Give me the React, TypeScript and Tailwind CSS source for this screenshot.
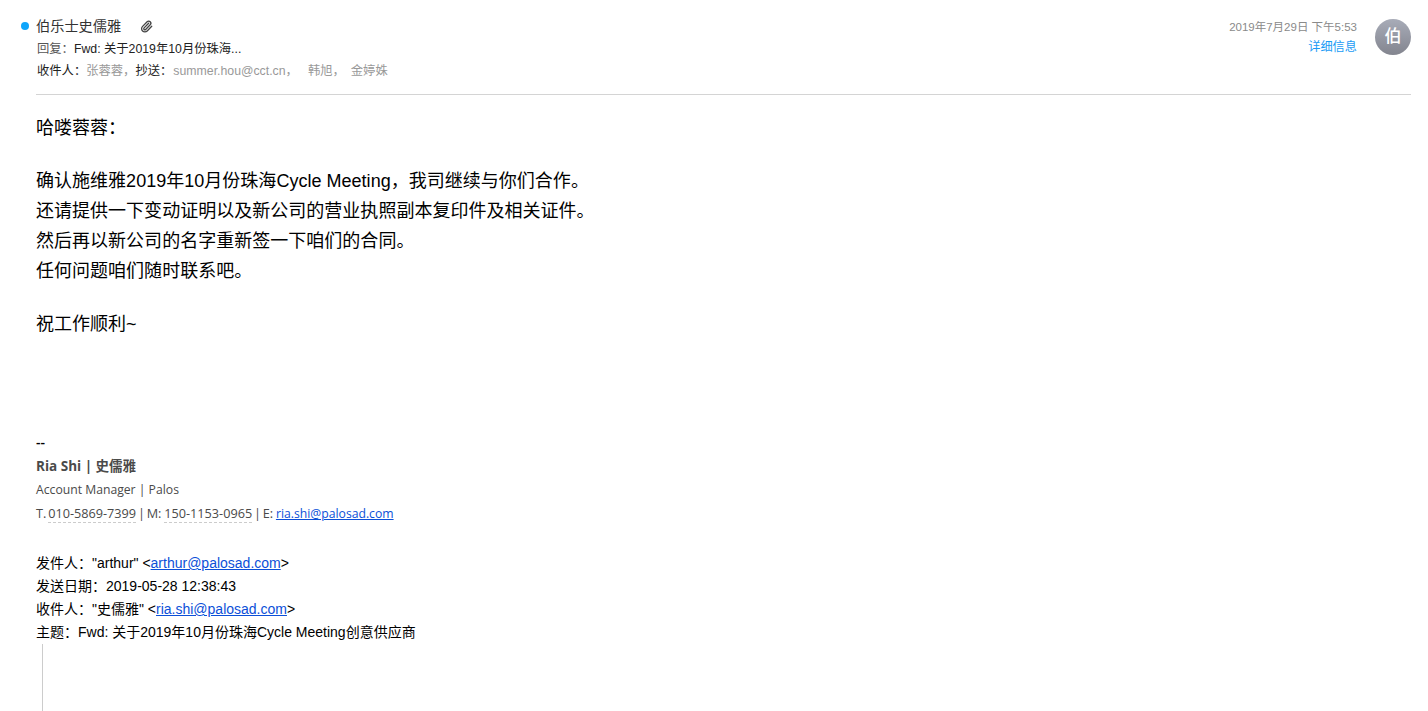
import { Paperclip } from 'lucide-react';

const sans = "font-['Liberation_Sans','Noto_Sans_CJK_SC',sans-serif]";

function Phone({ children, className }: { children: string; className?: string }) {
  return <span className={`border-b border-dashed border-[#ccc] ${className ?? ''}`}>{children}</span>;
}

function Mail({ children }: { children: string }) {
  return <a className="text-[#0b4fd8] underline">{children}</a>;
}

export default function App() {
  return (
    <div className={`h-[711px] overflow-hidden bg-white pl-[21px] pr-[17px] text-black ${sans}`}>
      <header className="flex h-[95px] flex-col border-b border-[#d4d4d4] ml-[15px] relative">
        <span className="absolute -left-[15px] top-[22px] h-2 w-2 rounded-full bg-[#0ea5fb]" />
        <div className="flex justify-between pt-[17px]">
          <div>
            <div className="flex h-[18px] items-center text-[14.2px] leading-[18px] text-[#333]">
              <span>伯乐士史儒雅</span>
              <Paperclip className="ml-[19px] h-[13px] w-[13px] text-[#444]" strokeWidth={2.4} />
            </div>
            <div className="ml-px mt-[5px] text-[12.3px] leading-[18px] text-[#222]">
              <span className="text-[#555]">回复：</span>Fwd: 关于2019年10月份珠海...
            </div>
            <div className="ml-px mt-[4px] flex text-[12.3px] leading-[18px] text-[#222]">
              <span>收件人：</span>
              <span className="text-[#999]">张蓉蓉，</span>
              <span>抄送：</span>
              <span className="ml-px text-[#999]">summer.hou@cct.cn，</span>
              <span className="ml-[10px] text-[#999]">韩旭，</span>
              <span className="ml-[6px] text-[#999]">金婷姝</span>
            </div>
          </div>
          <div className="flex gap-[18px]">
            <div className="pt-[2px] text-right text-[11.5px] leading-[16px]">
              <div className="text-[#8a8a8a]">2019年7月29日 下午5:53</div>
              <div className="mt-[4px] text-[12.2px] text-[#1a9bf5]">详细信息</div>
            </div>
            <div className="mt-[2px] flex h-9 w-9 items-center justify-center rounded-full bg-gradient-to-b from-[#a8acb8] to-[#83858f] text-[17px] font-medium text-white">
              伯
            </div>
          </div>
        </div>
      </header>

      <main className="ml-[15px]">
        <div className="pt-[18px] text-[18px] leading-[30px] tracking-[0.02px]">
          <p>哈喽蓉蓉：</p>
          <div className="mt-[23px]">
            <p>确认施维雅2019年10月份珠海Cycle Meeting，我司继续与你们合作。</p>
            <p>还请提供一下变动证明以及新公司的营业执照副本复印件及相关证件。</p>
            <p>然后再以新公司的名字重新签一下咱们的合同。</p>
            <p>任何问题咱们随时联系吧。</p>
          </div>
          <p className="mt-[23px]">祝工作顺利~</p>
        </div>

        <div className="mt-[91px] font-['Open_Sans','Noto_Sans_CJK_SC',sans-serif] text-[12.2px] leading-[24px] text-[#4a4a4a]">
          <div className="text-[14px] font-semibold text-black">--</div>
          <div className="text-[13.5px] font-bold">Ria Shi | 史儒雅</div>
          <div>Account Manager | Palos</div>
          <div className="-mt-px text-[12.7px] [word-spacing:-1.5px]">
            T. <Phone>010-5869-7399</Phone> | M: <Phone className="ml-px">150-1153-0965</Phone> | E:{' '}
            <span className="ml-px text-[12.2px]">
              <Mail>ria.shi@palosad.com</Mail>
            </span>
          </div>
        </div>

        <div className="mt-[26px] text-[14px] leading-[23px]">
          <div>发件人："arthur" &lt;<Mail>arthur@palosad.com</Mail>&gt;</div>
          <div>发送日期：2019-05-28 12:38:43</div>
          <div>收件人："史儒雅" &lt;<Mail>ria.shi@palosad.com</Mail>&gt;</div>
          <div>主题：Fwd: 关于2019年10月份珠海Cycle Meeting创意供应商</div>
        </div>

        <div className="ml-[6px] h-[200px] border-l border-[#ccc]" />
      </main>
    </div>
  );
}
